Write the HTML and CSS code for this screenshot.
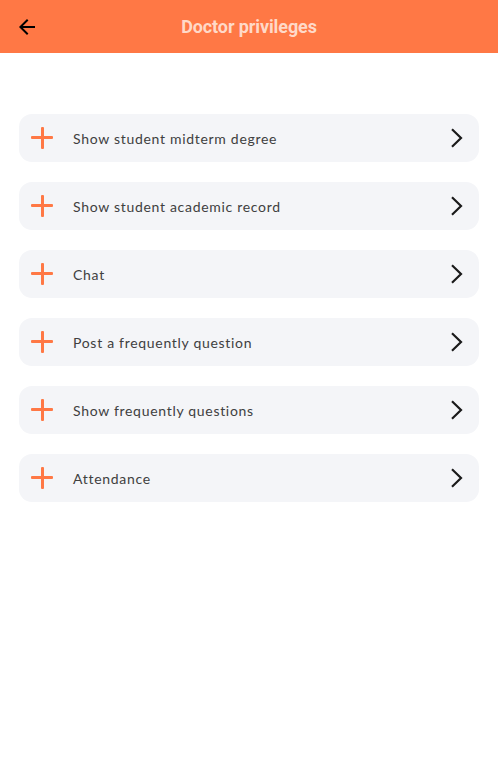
FILE: index.html
```html
<!DOCTYPE html>
<html>
<head>
<meta charset="utf-8">
<link rel="stylesheet" href="styles.css">
</head>
<body>
<header class="appbar">
  <button class="back" aria-label="Back">
    <svg width="24" height="24" viewBox="0 0 24 24"><path d="M20 11H7.83l5.59-5.59L12 4l-8 8 8 8 1.41-1.41L7.83 13H20v-2z" fill="#000"/></svg>
  </button>
  <h1 class="title">Doctor privileges</h1>
</header>
<main class="list">
  <div class="item"><span class="plus"></span><span class="label">Show student midterm degree</span><svg class="chev" width="16" height="20" viewBox="0 0 16 20"><path d="M3 1.3 L12 10 L3 18.7" fill="none" stroke="#1a1a1a" stroke-width="2.2"/></svg></div>
  <div class="item"><span class="plus"></span><span class="label">Show student academic record</span><svg class="chev" width="16" height="20" viewBox="0 0 16 20"><path d="M3 1.3 L12 10 L3 18.7" fill="none" stroke="#1a1a1a" stroke-width="2.2"/></svg></div>
  <div class="item"><span class="plus"></span><span class="label">Chat</span><svg class="chev" width="16" height="20" viewBox="0 0 16 20"><path d="M3 1.3 L12 10 L3 18.7" fill="none" stroke="#1a1a1a" stroke-width="2.2"/></svg></div>
  <div class="item"><span class="plus"></span><span class="label">Post a frequently question</span><svg class="chev" width="16" height="20" viewBox="0 0 16 20"><path d="M3 1.3 L12 10 L3 18.7" fill="none" stroke="#1a1a1a" stroke-width="2.2"/></svg></div>
  <div class="item"><span class="plus"></span><span class="label">Show frequently questions</span><svg class="chev" width="16" height="20" viewBox="0 0 16 20"><path d="M3 1.3 L12 10 L3 18.7" fill="none" stroke="#1a1a1a" stroke-width="2.2"/></svg></div>
  <div class="item"><span class="plus"></span><span class="label">Attendance</span><svg class="chev" width="16" height="20" viewBox="0 0 16 20"><path d="M3 1.3 L12 10 L3 18.7" fill="none" stroke="#1a1a1a" stroke-width="2.2"/></svg></div>
</main>
</body>
</html>
```

FILE: styles.css
```css
* { box-sizing: border-box; }
html, body { margin: 0; padding: 0; background: #fff; }
body { width: 498px; height: 763px; }
.appbar {
  height: 53px;
  background: #ff7845;
  display: flex;
  align-items: center;
  position: relative;
}
.back {
  border: 0; background: none; padding: 0;
  width: 24px; height: 24px;
  margin-left: 15px;
  display: flex;
}
.title {
  position: absolute;
  left: 0; right: 0; top: 0;
  margin: 0;
  text-align: center;
  line-height: 53px;
  font-family: Roboto, "Liberation Sans", sans-serif;
  font-weight: 700;
  font-size: 18px;
  letter-spacing: -0.1px;
  color: #ffd9c8;
  pointer-events: none;
}
.list {
  padding: 61px 19px 0 19px;
  display: flex;
  flex-direction: column;
  gap: 20.5px;
}
.item {
  height: 47.5px;
  background: #f4f5f8;
  border-radius: 13px;
  display: flex;
  align-items: center;
  padding: 0 14px 0 12px;
}
.plus {
  width: 22px; height: 22px;
  position: relative;
  flex: none;
}
.plus::before, .plus::after {
  content: "";
  position: absolute;
  background: #ff7845;
  border-radius: 1px;
}
.plus::before { left: 0; right: 0; top: 9.5px; height: 3px; }
.plus::after { top: 0; bottom: 0; left: 9.5px; width: 3px; }
.label {
  margin-left: 20px;
  flex: 1;
  font-family: Lato, "Noto Sans", sans-serif;
  font-size: 14px;
  letter-spacing: 0.7px;
  color: #404040;
  padding-top: 1px;
}
.chev { flex: none; }
```
